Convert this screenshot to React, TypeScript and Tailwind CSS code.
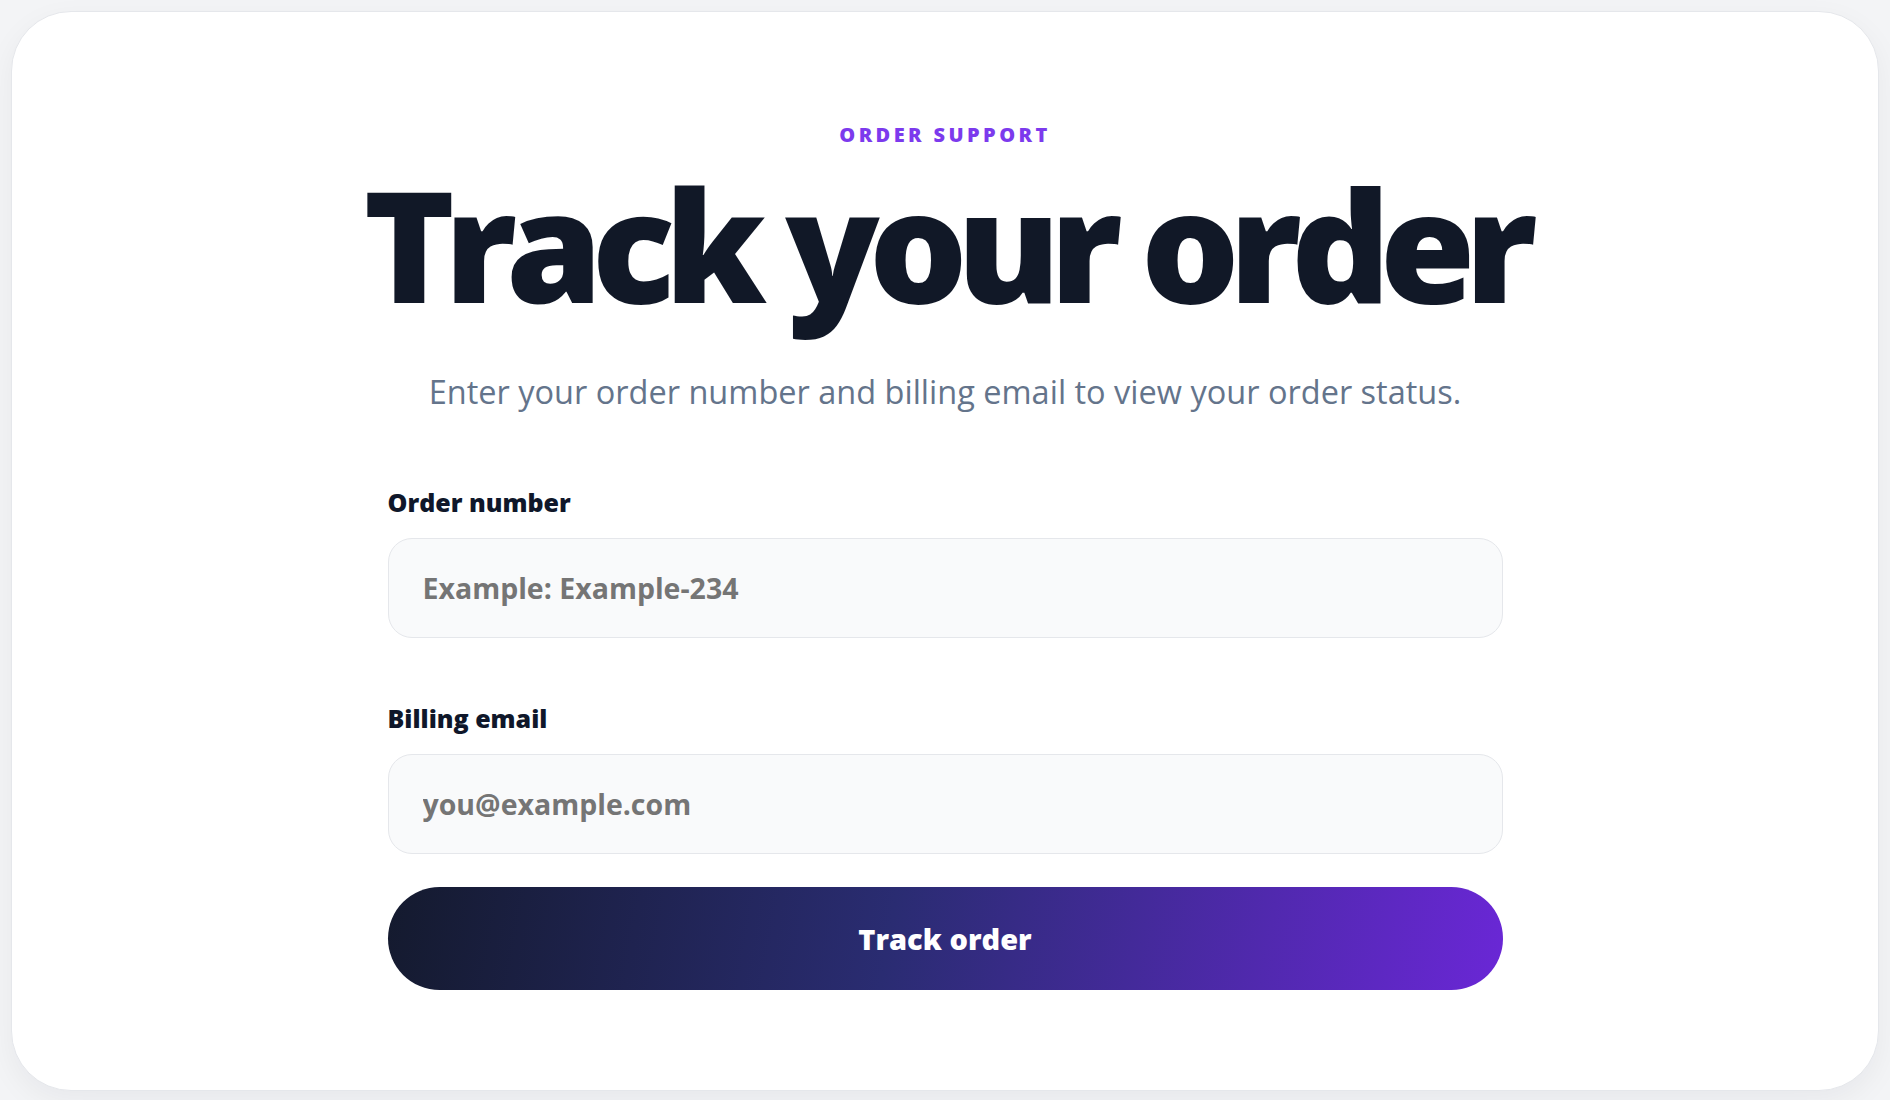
export default function App() {
  return (
    <main className="min-h-screen bg-[#f3f4f6] p-[11px] font-['Open_Sans',sans-serif]">
      <section className="flex h-[1080px] flex-col items-center rounded-[60px] border border-[#e5e7eb] bg-white pt-[109px] shadow-[0_10px_30px_rgba(15,23,42,0.05)]">
        <p className="text-[20px] font-extrabold uppercase leading-[28px] tracking-[0.17em] text-[#7c3aed]">
          Order support
        </p>
        <h1 className="mt-[16px] text-[155px] font-extrabold leading-none tracking-[-0.07em] text-[#111827]">
          Track your order
        </h1>
        <p className="mt-[52px] text-[32.5px] leading-[40px] text-[#64748b]">
          Enter your order number and billing email to view your order status.
        </p>

        <form className="mt-[74px] flex w-[1115px] flex-col">
          <label className="text-[25px] font-extrabold leading-[32px] text-[#0f172a]" htmlFor="order">
            Order number
          </label>
          <input
            id="order"
            placeholder="Example: Example-234"
            className="mt-[20px] h-[100px] rounded-3xl border border-[#e5e7eb] bg-[#f9fafb] px-[34px] text-[28.5px] font-bold text-[#0f172a] outline-none placeholder:text-[#757575]"
          />

          <label className="mt-[64px] text-[25px] font-extrabold leading-[32px] text-[#0f172a]" htmlFor="email">
            Billing email
          </label>
          <input
            id="email"
            placeholder="you@example.com"
            className="mt-[20px] h-[100px] rounded-3xl border border-[#e5e7eb] bg-[#f9fafb] px-[34px] text-[28.5px] font-bold text-[#0f172a] outline-none placeholder:text-[#757575]"
          />

          <button
            type="button"
            className="mt-[33px] h-[103px] rounded-full bg-[linear-gradient(100deg,#141a2e_0%,#2a2c72_45%,#6a27d6_100%)] text-[29px] font-extrabold text-white"
          >
            Track order
          </button>
        </form>
      </section>
    </main>
  );
}
